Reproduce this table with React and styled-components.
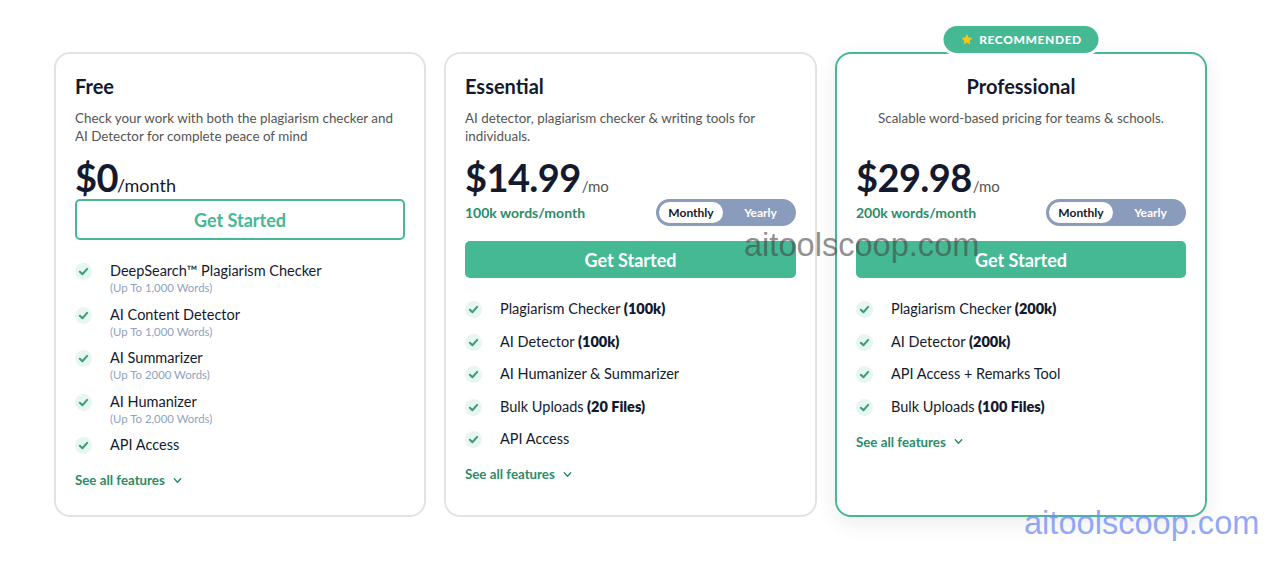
import React from 'react'
import styled, { createGlobalStyle } from 'styled-components'

const GlobalStyle = createGlobalStyle`
body {
    margin: 0;
    background: #fff;
    font-family: Lato, "Open Sans", sans-serif;
}
`;

const plans = [
    {
        name: 'Free',
        desc: 'Check your work with both the plagiarism checker and AI Detector for complete peace of mind',
        price: '$0',
        per: '/month',
        outline: true,
        features: [
            { text: 'DeepSearch™ Plagiarism Checker', sub: '(Up To 1,000 Words)' },
            { text: 'AI Content Detector', sub: '(Up To 1,000 Words)' },
            { text: 'AI Summarizer', sub: '(Up To 2000 Words)' },
            { text: 'AI Humanizer', sub: '(Up To 2,000 Words)' },
            { text: 'API Access' },
        ],
    },
    {
        name: 'Essential',
        desc: 'AI detector, plagiarism checker & writing tools for individuals.',
        price: '$14.99',
        per: '/mo',
        words: '100k words/month',
        features: [
            { text: 'Plagiarism Checker', bold: '(100k)' },
            { text: 'AI Detector', bold: '(100k)' },
            { text: 'AI Humanizer & Summarizer' },
            { text: 'Bulk Uploads', bold: '(20 Files)' },
            { text: 'API Access' },
        ],
    },
    {
        name: 'Professional',
        desc: 'Scalable word-based pricing for teams & schools.',
        price: '$29.98',
        per: '/mo',
        words: '200k words/month',
        featured: true,
        features: [
            { text: 'Plagiarism Checker', bold: '(200k)' },
            { text: 'AI Detector', bold: '(200k)' },
            { text: 'API Access + Remarks Tool' },
            { text: 'Bulk Uploads', bold: '(100 Files)' },
        ],
    },
];

const Check = () => (
    <CheckCircle>
        <svg width="11" height="11" viewBox="0 0 12 12" fill="none">
            <path d="M2 6.3 L4.8 9 L10 3.2" stroke="#3b9c7a" strokeWidth="2.2" strokeLinecap="round" strokeLinejoin="round" />
        </svg>
    </CheckCircle>
);

const Star = () => (
    <svg width="13" height="13" viewBox="0 0 24 24">
        <path d="M12 1.8l3.1 6.5 7 .9-5.2 4.9 1.3 7-6.2-3.4-6.2 3.4 1.3-7L1.9 9.2l7-.9z" fill="#f6c61b" />
    </svg>
);

const Chevron = () => (
    <svg width="11" height="11" viewBox="0 0 12 12" fill="none">
        <path d="M2.5 4.2 L6 7.8 L9.5 4.2" stroke="#2a8c6b" strokeWidth="1.6" strokeLinecap="round" strokeLinejoin="round" />
    </svg>
);

const Plan = ({ plan }) => (
    <Card featured={plan.featured}>
        {plan.featured && (
            <Badge><Star />RECOMMENDED</Badge>
        )}
        <Title center={plan.featured}>{plan.name}</Title>
        <Desc center={plan.featured}>{plan.desc}</Desc>
        <PriceRow>
            <Price>{plan.price}</Price>
            <Per big={plan.outline}>{plan.per}</Per>
        </PriceRow>
        {plan.words && (
            <WordsRow>
                <Words>{plan.words}</Words>
                <Toggle>
                    <ToggleOption active>Monthly</ToggleOption>
                    <ToggleOption>Yearly</ToggleOption>
                </Toggle>
            </WordsRow>
        )}
        <Button outline={plan.outline}>Get Started</Button>
        <Features tall={plan.outline}>
            {plan.features.map((f) => (
                <Feature key={f.text}>
                    <Check />
                    <FeatureText>
                        <FeatureName>
                            {f.text}
                            {f.bold && <b> {f.bold}</b>}
                        </FeatureName>
                        {f.sub && <FeatureSub>{f.sub}</FeatureSub>}
                    </FeatureText>
                </Feature>
            ))}
        </Features>
        <SeeAll>See all features <Chevron /></SeeAll>
    </Card>
);

export default function App() {
    return (
        <Page>
            <GlobalStyle />
            <Grid>
                {plans.map((p) => <Plan key={p.name} plan={p} />)}
            </Grid>
            <Watermark>aitoolscoop.com</Watermark>
            <Watermark blue>aitoolscoop.com</Watermark>
        </Page>
    )
}

const Page = styled.div`
position: relative;
width: 1280px;
height: 563px;
box-sizing: border-box;
padding: 52px 0 0 54px;
background: #fff;
overflow: hidden;
`;

const Grid = styled.div`
display: grid;
grid-template-columns: 372px 373px 372px;
column-gap: 18px;
`;

const Card = styled.div`
position: relative;
box-sizing: border-box;
height: 465px;
padding: 20px 19px 20px 19px;
border: 2px solid ${(p) => (p.featured ? '#44b994' : '#e3e3e3')};
border-radius: 16px;
background: #fff;
box-shadow: ${(p) => (p.featured ? '0 6px 22px rgba(0,0,0,0.08)' : 'none')};
display: flex;
flex-direction: column;
`;

const Badge = styled.div`
position: absolute;
top: -28px;
left: 50%;
transform: translateX(-50%);
height: 27px;
width: 155px;
box-sizing: border-box;
border-radius: 14px;
background: #44b994;
box-shadow: 0 0 0 3px #fff;
color: #fff;
font-size: 12px;
font-weight: 900;
letter-spacing: 0.6px;
display: flex;
align-items: center;
justify-content: center;
gap: 6px;
`;

const Title = styled.div`
font-size: 20px;
font-weight: 700;
line-height: 24px;
color: #141a2e;
text-align: ${(p) => (p.center ? 'center' : 'left')};
`;

const Desc = styled.div`
margin-top: 11px;
min-height: 36px;
font-size: 13.4px;
line-height: 18px;
color: #555;
text-align: ${(p) => (p.center ? 'center' : 'left')};
`;

const PriceRow = styled.div`
margin-top: 10px;
display: flex;
align-items: baseline;
height: 44px;
`;

const Price = styled.span`
font-size: 38px;
font-weight: 700;
color: #141a2e;
letter-spacing: -0.6px;
line-height: 44px;
`;

const Per = styled.span`
margin-left: ${(p) => (p.big ? '-1px' : '1px')};
font-size: ${(p) => (p.big ? '18px' : '15px')};
color: ${(p) => (p.big ? '#141a2e' : '#555')};
`;

const WordsRow = styled.div`
display: flex;
align-items: center;
justify-content: space-between;
`;

const Words = styled.div`
font-size: 14px;
font-weight: 700;
color: #2a8c6b;
`;

const Toggle = styled.div`
width: 140px;
height: 27px;
box-sizing: border-box;
padding: 3px;
border-radius: 14px;
background: #8a9cbc;
display: flex;
align-items: center;
`;

const ToggleOption = styled.div`
height: 21px;
width: ${(p) => (p.active ? '64px' : 'auto')};
flex: ${(p) => (p.active ? 'none' : '1')};
padding-left: ${(p) => (p.active ? '0' : '5px')};
border-radius: 11px;
background: ${(p) => (p.active ? '#fff' : 'transparent')};
color: ${(p) => (p.active ? '#141a2e' : '#fff')};
font-size: 12px;
font-weight: 700;
display: flex;
align-items: center;
justify-content: center;
`;

const Button = styled.div`
margin-top: ${(p) => (p.outline ? '0' : '15px')};
height: ${(p) => (p.outline ? '41px' : '37px')};
box-sizing: border-box;
border-radius: 5px;
border: ${(p) => (p.outline ? '2px solid #44b994' : 'none')};
background: ${(p) => (p.outline ? '#fff' : '#44b994')};
color: ${(p) => (p.outline ? '#44b994' : '#fff')};
font-size: 18px;
font-weight: 700;
display: flex;
align-items: center;
justify-content: center;
`;

const Features = styled.div`
margin-top: 21px;
display: flex;
flex-direction: column;
gap: ${(p) => (p.tall ? '9.5px' : '12.5px')};
`;

const Feature = styled.div`
display: flex;
align-items: flex-start;
gap: 18px;
`;

const CheckCircle = styled.div`
flex: none;
width: 17px;
height: 17px;
margin-top: 2px;
border-radius: 50%;
background: #e7f6f0;
display: flex;
align-items: center;
justify-content: center;
`;

const FeatureText = styled.div`
display: flex;
flex-direction: column;
`;

const FeatureName = styled.div`
font-size: 14.5px;
line-height: 20px;
color: #141a2e;

b {
    font-weight: 800;
}
`;

const FeatureSub = styled.div`
font-size: 11.4px;
line-height: 14px;
color: #8fa2c0;
`;

const SeeAll = styled.div`
margin-top: 17px;
font-size: 13.3px;
font-weight: 700;
color: #2a8c6b;
display: flex;
align-items: center;
gap: 7px;
`;

const Watermark = styled.div`
position: absolute;
left: ${(p) => (p.blue ? '1024px' : '744px')};
top: ${(p) => (p.blue ? '504px' : '226px')};
font-family: "Liberation Sans", Arial, sans-serif;
font-size: 32.6px;
color: ${(p) => (p.blue ? 'rgba(110,140,245,0.75)' : 'rgba(70,70,70,0.6)')};
pointer-events: none;
`;
